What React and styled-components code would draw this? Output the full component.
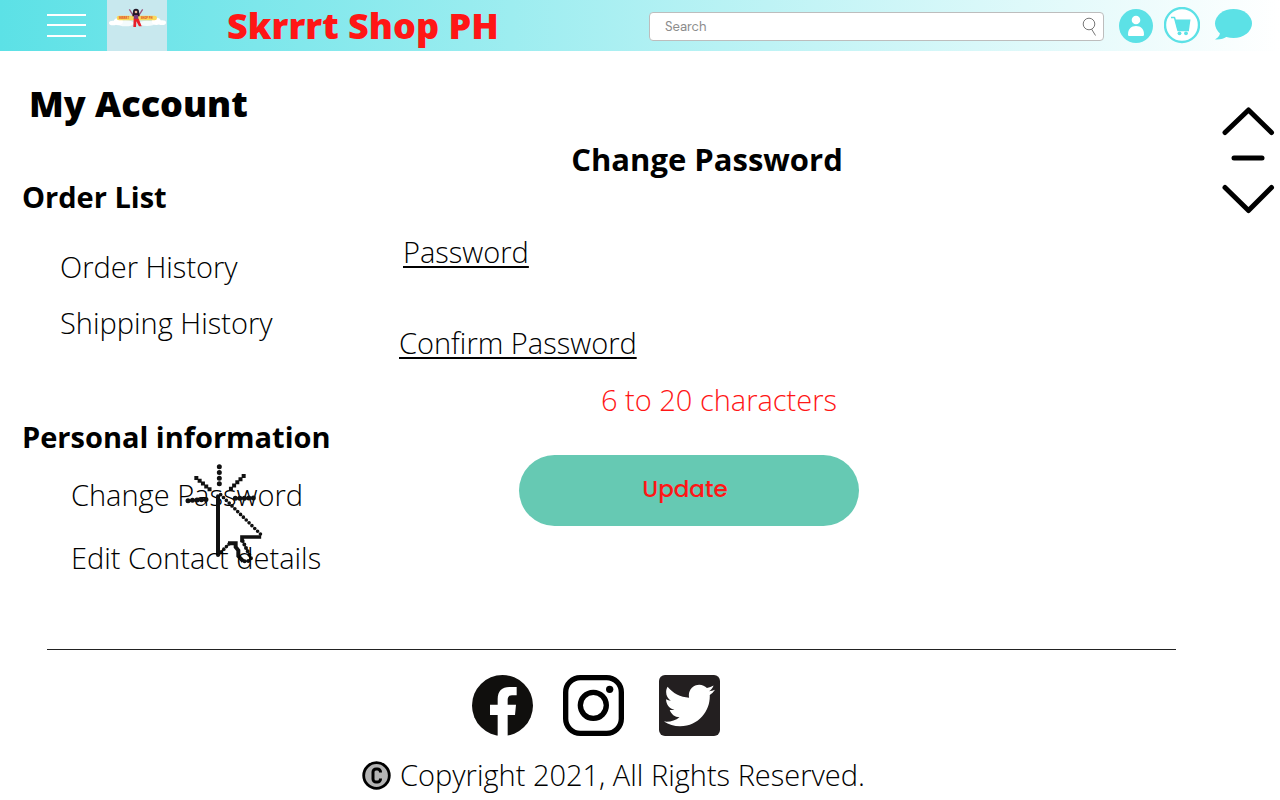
import React from 'react';
import styled, { createGlobalStyle } from 'styled-components';
import { FaTwitter } from 'react-icons/fa';

const GlobalStyle = createGlobalStyle`
  * { box-sizing: border-box; }
  body {
    margin: 0;
    background: #fff;
    color: #000;
    font-family: 'Open Sans', 'Noto Sans', sans-serif;
    font-size: 29px;
    font-weight: 300;
    line-height: 40px;
  }
  h1, h2, h3, p, ul { margin: 0; padding: 0; }
  a { color: inherit; text-decoration: none; }
  button { padding: 0; border: 0; background: none; cursor: pointer; }
  svg { display: block; }
`;

const Header = styled.header`
  display: flex;
  align-items: center;
  height: 51px;
  padding: 0 28px 0 47px;
  background: linear-gradient(90deg, #5ce1e6, #fff);
`;

const MenuButton = styled.button`
  flex: none;
  width: 40px;
  margin-right: 20px;
`;

const LogoLink = styled.a`
  flex: none;
  width: 60px;
  margin-right: 60px;
`;

const ShopName = styled.p`
  flex: 0 0 422px;
  font-size: 36px;
  font-weight: 800;
  line-height: 48px;
  color: #ff1616;
  white-space: nowrap;
`;

const SearchBox = styled.form`
  display: flex;
  flex: 1;
  align-items: center;
  min-width: 0;
  height: 29px;
  margin: 2px 15px 0 0;
  padding: 0 6px 0 15px;
  background: #fff;
  border: 1px solid #bdbdbd;
  border-radius: 4px;
`;

const SearchInput = styled.input`
  flex: 1;
  min-width: 0;
  height: 20px;
  padding: 0;
  border: 0;
  outline: 0;
  background: none;
  font: 400 13px/20px 'DM Sans', Inter, Roboto, sans-serif;
  color: #444;
  &::placeholder { color: #8c8c8c; opacity: 1; }
`;

const HeaderActions = styled.nav`
  display: flex;
  flex: none;
  align-items: center;
  gap: 11px;
`;

const Layout = styled.div`
  display: grid;
  grid-template-columns: 399px minmax(0, 1fr) 58px;
`;

const Sidebar = styled.aside`
  padding: 29px 0 71px 22px;
`;

const PageTitle = styled.h1`
  margin: 0 0 49px 7px;
  font-size: 36px;
  font-weight: 800;
  line-height: 48px;
`;

const GroupTitle = styled.h2`
  font-size: 29px;
  font-weight: 700;
  line-height: 40px;
`;

const LinkList = styled.ul`
  display: flex;
  flex-direction: column;
  gap: ${(p) => p.$gap}px;
  margin: ${(p) => p.$space};
  list-style: none;
`;

const LinkItem = styled.li`
  position: relative;
`;

const ClickCursor = styled.svg`
  position: absolute;
  left: 114px;
  top: -12px;
  pointer-events: none;
`;

const PasswordForm = styled.form`
  display: flex;
  flex-direction: column;
  max-width: 580px;
  padding-top: 88px;
`;

const FormTitle = styled.h2`
  margin-bottom: 53px;
  padding-left: 36px;
  font-size: 31px;
  font-weight: 700;
  line-height: 40px;
  text-align: center;
`;

const Field = styled.div`
  display: flex;
  gap: 16px;
  margin-bottom: ${(p) => p.$after}px;
  padding-left: ${(p) => p.$indent || 0}px;
`;

const FieldLabel = styled.label`
  flex: none;
  text-decoration: underline;
  text-decoration-thickness: 2px;
  text-underline-offset: 3px;
  text-decoration-skip-ink: none;
`;

const FieldInput = styled.input`
  flex: 1;
  min-width: 0;
  padding: 0;
  border: 0;
  outline: 0;
  background: none;
  font: inherit;
`;

const Hint = styled.p`
  margin-bottom: 35px;
  padding-left: 60px;
  color: #ff1616;
  text-align: center;
`;

const UpdateButton = styled.button`
  align-self: center;
  width: 340px;
  height: 71px;
  padding: 0 8px 3px 0;
  border-radius: 36px;
  background: #66c9b3;
  color: #ff1616;
  font: 500 23px/32px Poppins, Inter, sans-serif;
`;

const Scroller = styled.div`
  display: flex;
  flex-direction: column;
  gap: 19px;
  padding: 55px 0 0;
`;

const Footer = styled.footer`
  margin: 0 104px 0 47px;
  padding-top: 25px;
  border-top: 1px solid #222;
`;

const SocialLinks = styled.nav`
  display: flex;
  justify-content: center;
  gap: 30px;
  padding-right: 32px;
`;

const TwitterBadge = styled.a`
  display: flex;
  align-items: center;
  justify-content: center;
  width: 61px;
  height: 61px;
  margin-left: 5px;
  border-radius: 6px;
  background: #231f20;
  color: #fff;
`;

const Copyright = styled.p`
  display: flex;
  align-items: center;
  justify-content: center;
  gap: 9px;
  margin-top: 19px;
  padding-left: 4px;
`;

function LogoArt() {
  return (
    <svg width="60" height="51" viewBox="0 0 180 153" role="img" aria-label="Skrrrt Shop PH">
      <rect width="180" height="153" fill="#c8e8ee" />
      <g fill="#fff">
        <ellipse cx="18" cy="69" rx="12" ry="7" />
        <ellipse cx="34" cy="65" rx="14" ry="11" />
        <ellipse cx="56" cy="70" rx="25" ry="9" opacity=".8" />
        <ellipse cx="120" cy="70" rx="25" ry="8" opacity=".8" />
        <ellipse cx="148" cy="64" rx="14" ry="11" />
        <ellipse cx="165" cy="68" rx="12" ry="7" />
      </g>
      <rect x="29" y="47" width="121" height="14" rx="7" fill="#f9d95c" />
      <g fill="#e2572c" fontFamily="Open Sans" fontWeight="800" fontSize="8">
        <text x="35" y="57">SKRRRT</text>
        <text x="101" y="57">SHOP PH</text>
      </g>
      <path d="M67 28l9 14 8 8M107 28l-9 14-8 8" fill="none" stroke="#9c5a80" strokeWidth="4" />
      <circle cx="87" cy="35" r="9" fill="#231726" />
      <path d="M78 35h18l2 14H76z" fill="#231726" />
      <circle cx="87" cy="36" r="4" fill="#e9b294" />
      <path d="M81 45h12l1 12H80z" fill="#7b3b7c" />
      <path d="M80 56h15l9 23h-8l-8-15-1 17h-8z" fill="#e8202a" />
    </svg>
  );
}

function Chevron({ down }) {
  return (
    <svg width="54" height={down ? 34 : 30} fill="none" stroke="#000" strokeWidth="5" strokeLinecap="round" strokeLinejoin="round">
      <path d={down ? 'M3 7.500L26.500 30.500L49.500 7.500' : 'M3 26.500L26.500 4L49.500 26.500'} />
    </svg>
  );
}

function PointerArt() {
  return (
    <ClickCursor width="78" height="102" viewBox="45 40 234 306" fill="none" stroke="#111" strokeLinecap="round" aria-hidden="true">
      <g strokeWidth="15" strokeDasharray="0 17.2">
        <path d="M148 51V104" />
        <path d="M221 79L182 118" strokeLinecap="square" strokeDasharray="0 13.500" strokeWidth="12" />
        <path d="M79 85L119 119" strokeLinecap="square" strokeDasharray="0 13" strokeWidth="12" />
        <path d="M54 153L110 149" strokeDasharray="0 13.500" />
        <path d="M196 146L252 145" strokeDasharray="0 13.500" />
      </g>
      <path d="M144 140V316" strokeWidth="12" />
      <path d="M152 135L272 254" strokeWidth="11" strokeDasharray="0 12" />
      <path d="M268 262H216V272" strokeWidth="11" strokeLinecap="square" />
      <path d="M146 314L179 281" strokeWidth="11" strokeDasharray="0 11" />
      <path d="M180 281H197V292L205 302V319L216 331" strokeWidth="12" strokeLinecap="square" />
      <path d="M218 274L243 326L234 335H216" strokeWidth="12" strokeDasharray="0 11.500" />
    </ClickCursor>
  );
}

export default function App() {
  const stay = (e) => e.preventDefault();
  return (
    <>
      <GlobalStyle />
      <Header>
        <MenuButton type="button" aria-label="Menu">
          <svg width="40" height="26" viewBox="0 0 40 26" fill="#fff">
            <rect y="1" width="39" height="2" />
            <rect y="11" width="39" height="2" />
            <rect y="22" width="39" height="2" />
          </svg>
        </MenuButton>
        <LogoLink href="#home"><LogoArt /></LogoLink>
        <ShopName>Skrrrt Shop PH</ShopName>
        <SearchBox role="search" onSubmit={stay}>
          <SearchInput type="search" aria-label="Search" placeholder="Search" />
          <button type="submit" aria-label="Submit search">
            <svg width="15" height="20" viewBox="0 0 15 20" fill="none" stroke="#777" strokeWidth="1">
              <circle cx="7" cy="7" r="5.800" />
              <path d="M9.500 12L13.500 18.500" />
            </svg>
          </button>
        </SearchBox>
        <HeaderActions aria-label="Shop">
          <a href="#account" aria-label="Account">
            <svg width="34" height="34" viewBox="0 0 34 34">
              <circle cx="17" cy="17" r="17" fill="#5ce1e6" />
              <circle cx="17" cy="11" r="4.300" fill="#fff" />
              <path d="M9 25.500c0-5.500 3-8.500 8-8.500s8 3 8 8.500c0 1-.6 1.500-1.500 1.500h-13c-.9 0-1.500-.5-1.500-1.500z" fill="#fff" />
            </svg>
          </a>
          <a href="#cart" aria-label="Cart">
            <svg width="36" height="37" viewBox="0 0 36 37">
              <circle cx="18" cy="18" r="17" fill="#fff" stroke="#5ce1e6" strokeWidth="2.400" />
              <path d="M7 10.500h3.500l3.500 13h11" fill="none" stroke="#5ce1e6" strokeWidth="1.500" strokeLinejoin="round" />
              <path d="M11 12.500h15.500L25 23H13.500z" fill="#5ce1e6" />
              <circle cx="15.500" cy="26.300" r="1.900" fill="#5ce1e6" />
              <circle cx="22" cy="26.300" r="1.900" fill="#5ce1e6" />
            </svg>
          </a>
          <a href="#chat" aria-label="Chat">
            <svg width="41" height="33" viewBox="0 0 41 33" fill="#5ce1e6">
              <ellipse cx="22.500" cy="14.500" rx="18.500" ry="14.500" />
              <path d="M9 23c0 3-1 5-5 7.500 5 .5 9-1 12-3z" />
            </svg>
          </a>
        </HeaderActions>
      </Header>

      <Layout>
        <Sidebar>
          <PageTitle>My Account</PageTitle>
          <GroupTitle>Order List</GroupTitle>
          <LinkList $gap={16} $space="30px 0 74px 38px">
            <LinkItem><a href="#orders">Order History</a></LinkItem>
            <LinkItem><a href="#shipping">Shipping History</a></LinkItem>
          </LinkList>
          <GroupTitle>Personal information</GroupTitle>
          <LinkList $gap={23} $space="18px 0 0 49px">
            <LinkItem>
              <a href="#password">Change Password</a>
              <PointerArt />
            </LinkItem>
            <LinkItem><a href="#contact">Edit Contact details</a></LinkItem>
          </LinkList>
        </Sidebar>

        <main>
          <PasswordForm onSubmit={stay}>
            <FormTitle>Change Password</FormTitle>
            <Field $after={51} $indent={4}>
              <FieldLabel htmlFor="password">Password</FieldLabel>
              <FieldInput id="password" type="password" />
            </Field>
            <Field $after={17}>
              <FieldLabel htmlFor="confirm">Confirm Password</FieldLabel>
              <FieldInput id="confirm" type="password" />
            </Field>
            <Hint>6 to 20 characters</Hint>
            <UpdateButton type="submit">Update</UpdateButton>
          </PasswordForm>
        </main>

        <Scroller>
          <button type="button" aria-label="Scroll up"><Chevron /></button>
          <svg width="54" height="6" viewBox="0 0 54 6">
            <path d="M12 3H40" stroke="#000" strokeWidth="5" strokeLinecap="round" />
          </svg>
          <button type="button" aria-label="Scroll down"><Chevron down /></button>
        </Scroller>
      </Layout>

      <Footer>
        <SocialLinks aria-label="Social media">
          <a href="#facebook" aria-label="Facebook">
            <svg width="61" height="61" viewBox="0 0 183 183">
              <circle cx="91.500" cy="91.500" r="91.500" fill="#100f0d" />
              <path d="M77 183V120H54V89H77V72C77 48 90 36 112 36H134V61H120C111 61 107 66 107 74V89H132L129 120H107V183Z" fill="#fff" />
            </svg>
          </a>
          <a href="#instagram" aria-label="Instagram">
            <svg width="61" height="61" viewBox="0 0 183 183" fill="none" stroke="#000" strokeWidth="16">
              <rect x="8" y="8" width="167" height="167" rx="44" />
              <circle cx="91" cy="91" r="39" />
              <circle cx="140" cy="43" r="11" fill="#000" stroke="none" />
            </svg>
          </a>
          <TwitterBadge href="#twitter" aria-label="Twitter"><FaTwitter size={51} /></TwitterBadge>
        </SocialLinks>
        <Copyright>
          <svg width="29" height="29" viewBox="0 0 29 29" fill="none" stroke="#000" aria-hidden="true">
            <circle cx="14.500" cy="14.500" r="12.800" fill="#b4b4b4" strokeWidth="2.800" />
            <path d="M18.500 11.500V11a3 3 0 0 0-3-3h-1.500a3 3 0 0 0-3 3v7a3 3 0 0 0 3 3h1.500a3 3 0 0 0 3-3v-.5" strokeWidth="3" />
          </svg>
          Copyright 2021, All Rights Reserved.
        </Copyright>
      </Footer>
    </>
  );
}
